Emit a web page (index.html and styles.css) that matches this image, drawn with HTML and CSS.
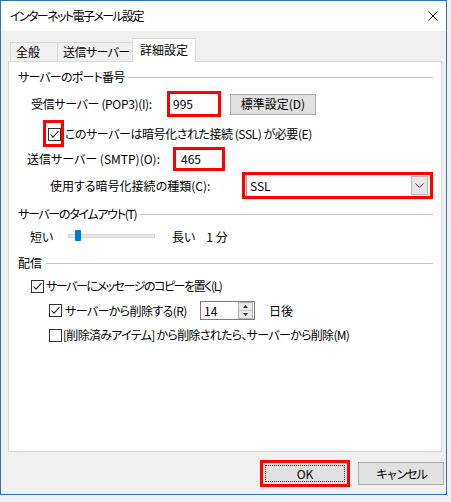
FILE: index.html
```html
<!DOCTYPE html>
<html lang="ja">
<head>
    <meta charset="UTF-8">
    <title>インターネット電子メール設定</title>
    <link rel="stylesheet" href="styles.css">
</head>
<body>
    <div class="window">
        <div class="titlebar">
            <span class="title">インターネット電子メール設定</span>
            <svg class="close" width="10" height="10" viewBox="0 0 10 10">
                <path d="M0.5 0.5 L9.5 9.5 M9.5 0.5 L0.5 9.5" stroke="#000" stroke-width="1" fill="none"/>
            </svg>
        </div>

        <div class="client">
            <div class="tabs">
                <div class="tab tab-general">全般</div>
                <div class="tab tab-smtp">送信サーバー</div>
                <div class="tab tab-adv active">詳細設定</div>
            </div>

            <div class="panel">
                <!-- server ports -->
                <div class="group-head head-ports"><span>サーバーのポート番号</span></div>

                <div class="row row-pop">
                    <span class="label">受信サーバー (POP3)(I):</span>
                    <span class="textbox marked">995</span>
                    <button class="btn btn-default">標準設定(D)</button>
                </div>

                <div class="row row-ssl">
                    <span class="cb-mark">
                        <svg class="cb" width="13" height="13" viewBox="0 0 13 13">
                            <rect x="0.5" y="0.5" width="12" height="12" fill="#fff" stroke="#333"/>
                            <path d="M2.5 6.5 L5 9.2 L10.5 3.2" stroke="#222" stroke-width="1.1" fill="none"/>
                        </svg>
                    </span>
                    <span class="cb-text">このサーバーは暗号化された接続 (SSL) が必要(E)</span>
                </div>

                <div class="row row-smtp">
                    <span class="label">送信サーバー (SMTP)(O):</span>
                    <span class="textbox marked">465</span>
                </div>

                <div class="row row-enc">
                    <span class="label">使用する暗号化接続の種類(C):</span>
                    <span class="select-mark">
                        <span class="select">
                            <span class="select-value">SSL</span>
                            <span class="select-arrow">
                                <svg width="9" height="5" viewBox="0 0 9 5">
                                    <path d="M0.5 0.5 L4.5 4.5 L8.5 0.5" stroke="#444" stroke-width="1" fill="none"/>
                                </svg>
                            </span>
                        </span>
                    </span>
                </div>

                <!-- timeout -->
                <div class="group-head head-timeout"><span>サーバーのタイムアウト(T)</span></div>

                <div class="row row-slider">
                    <span class="s-short">短い</span>
                    <span class="track"><span class="thumb"></span></span>
                    <span class="s-long">長い</span>
                    <span class="s-value">1 分</span>
                </div>

                <!-- delivery -->
                <div class="group-head head-delivery"><span>配信</span></div>

                <div class="row row-copy">
                    <svg class="cb" width="13" height="13" viewBox="0 0 13 13">
                        <rect x="0.5" y="0.5" width="12" height="12" fill="#fff" stroke="#333"/>
                        <path d="M2.5 6.5 L5 9.2 L10.5 3.2" stroke="#222" stroke-width="1.1" fill="none"/>
                    </svg>
                    <span class="cb-text">サーバーにメッセージのコピーを置く(L)</span>
                </div>

                <div class="row row-remove">
                    <svg class="cb" width="13" height="13" viewBox="0 0 13 13">
                        <rect x="0.5" y="0.5" width="12" height="12" fill="#fff" stroke="#333"/>
                        <path d="M2.5 6.5 L5 9.2 L10.5 3.2" stroke="#222" stroke-width="1.1" fill="none"/>
                    </svg>
                    <span class="cb-text">サーバーから削除する(R)</span>
                    <span class="spin">
                        <span class="spin-value">14</span>
                        <span class="spin-btns">
                            <svg width="15" height="17" viewBox="0 0 15 17">
                                <rect x="0.5" y="0.5" width="14" height="16" fill="#e8e8e8" stroke="#b5b5b5"/>
                                <path d="M1 8.5 H14" stroke="#c8c8c8"/>
                                <path d="M5 6 L7.5 3 L10 6 Z" fill="#333"/>
                                <path d="M5 11 L7.5 14 L10 11 Z" fill="#333"/>
                            </svg>
                        </span>
                    </span>
                    <span class="days">日後</span>
                </div>

                <div class="row row-deleted">
                    <svg class="cb" width="13" height="13" viewBox="0 0 13 13">
                        <rect x="0.5" y="0.5" width="12" height="12" fill="#fff" stroke="#333"/>
                    </svg>
                    <span class="cb-text">[削除済みアイテム] から削除されたら、サーバーから削除(M)</span>
                </div>
            </div>

            <div class="footer">
                <button class="btn btn-ok"><span class="focus">OK</span></button>
                <button class="btn btn-cancel">キャンセル</button>
            </div>
        </div>
    </div>
</body>
</html>
```

FILE: styles.css
```css
* {
    box-sizing: border-box;
}
body {
    margin: 0;
    background-color: #f0f0f0;
    font-family: "Noto Sans CJK JP", "Noto Sans", sans-serif;
    font-size: 12px;
    line-height: 18px;
    color: #000;
    font-feature-settings: "palt";
}
.window {
    width: 447px;
    height: 495px;
    border: 1px solid #3872ad;
    background-color: #f0f0f0;
    display: flex;
    flex-direction: column;
}
.titlebar {
    height: 30px;
    background-color: #fff;
    display: flex;
    align-items: center;
    justify-content: space-between;
    padding: 0 8px 0 9px;
    flex-shrink: 0;
}
.title {
    letter-spacing: -1.6px;
}
.client {
    padding-top: 7px;
}

/* tabs */
.tabs {
    display: flex;
    align-items: flex-end;
    height: 23px;
    margin-left: 9px;
    position: relative;
    z-index: 1;
}
.tab {
    height: 19px;
    border: 1px solid #d9d9d9;
    border-bottom: none;
    background-color: #f0f0f0;
    padding-left: 5px;
    display: flex;
    align-items: center;
    margin-left: -1px;
    white-space: nowrap;
}
.tab-general {
    width: 48px;
    margin-left: 0;
}
.tab-smtp {
    width: 76px;
    letter-spacing: -0.6px;
}
.tab.active {
    width: 64px;
    height: 24px;
    margin-bottom: -1px;
    background-color: #fff;
    padding-left: 7px;
    padding-bottom: 1px;
}

.panel {
    margin-left: 7px;
    width: 434px;
    height: 391px;
    border: 1px solid #d9d9d9;
    background-color: #fff;
    padding: 6px 8px 0 9px;
}

/* group headers */
.group-head {
    display: flex;
    align-items: center;
    height: 18px;
    white-space: nowrap;
}
.group-head::after {
    content: "";
    flex: 1;
    height: 1px;
    background-color: #c3c3c3;
    margin-left: 4px;
}
.head-ports span {
    letter-spacing: -0.8px;
}
.head-timeout {
    margin-top: 6px;
}
.head-timeout span {
    letter-spacing: -1.3px;
}
.head-delivery {
    margin-top: 8px;
}

.row {
    display: flex;
    align-items: center;
    white-space: nowrap;
}

.textbox {
    display: flex;
    align-items: center;
    background-color: #fff;
    border: 1px solid #7a7a7a;
}
.marked {
    border: 3px solid #f00;
}

.btn {
    font-family: inherit;
    font-size: 12px;
    color: #000;
    background-color: #e1e1e1;
    border: 1px solid #adadad;
    padding: 0;
    margin: 0;
    line-height: 18px;
}

/* port rows */
.row-pop {
    height: 26px;
    margin-top: 5px;
}
.row-pop .label {
    margin-left: 13px;
    width: 136px;
    letter-spacing: -0.35px;
}
.row-pop .textbox {
    width: 54px;
    height: 26px;
    padding-left: 3px;
}
.btn-default {
    margin-left: 9px;
    width: 86px;
    height: 21px;
}

.row-ssl {
    height: 27px;
    margin-top: 3px;
}
.cb-mark {
    margin-left: 25px;
    width: 21px;
    height: 27px;
    border: 3px solid #f00;
    display: flex;
    align-items: center;
    justify-content: flex-end;
    padding-top: 1px;
}
.cb {
    display: block;
    flex-shrink: 0;
}
.row-ssl .cb-text {
    margin-left: 1px;
    letter-spacing: -0.45px;
}

.row-smtp {
    height: 24px;
}
.row-smtp .label {
    margin-left: 9px;
    width: 146px;
}
.row-smtp .textbox {
    width: 52px;
    height: 24px;
    padding-left: 5px;
}

.row-enc {
    height: 27px;
    margin-top: 1px;
}
.row-enc .label {
    margin-left: 32px;
    width: 193px;
}
.select-mark {
    width: 192px;
    height: 27px;
    border: 3px solid #f00;
    padding: 0 1px;
    display: flex;
    align-items: center;
}
.select {
    flex: 1;
    height: 21px;
    border-left: 1px solid #9a9a9a;
    display: flex;
    align-items: center;
    justify-content: space-between;
    padding-left: 3px;
}
.select-arrow {
    width: 17px;
    height: 19px;
    background-color: #e6e6e6;
    border: 1px solid #b9b9b9;
    display: flex;
    align-items: center;
    justify-content: center;
    margin-right: 1px;
}

/* timeout slider */
.row-slider {
    height: 18px;
    margin-top: 5px;
}
.s-short {
    margin-left: 12px;
    width: 38px;
}
.track {
    width: 87px;
    height: 4px;
    background-color: #e7eaea;
    border: 1px solid #d6d6d6;
    position: relative;
    margin-top: -2px;
}
.thumb {
    position: absolute;
    left: 6px;
    top: -5px;
    width: 6px;
    height: 11px;
    border-radius: 1px;
    background-color: #007ad9;
}
.s-long {
    margin-left: 17px;
}
.s-value {
    margin-left: 11px;
}

/* delivery rows */
.row-copy {
    height: 18px;
    margin-top: 5px;
}
.row-copy .cb {
    margin-left: 13px;
}
.row-copy .cb-text {
    margin-left: 2px;
    letter-spacing: -1.45px;
}

.row-remove {
    height: 19px;
    margin-top: 6px;
}
.row-remove .cb {
    margin-left: 31px;
}
.row-remove .cb-text {
    margin-left: 3px;
    width: 135px;
    letter-spacing: -0.6px;
}
.spin {
    width: 55px;
    height: 19px;
    border: 1px solid #7a7a7a;
    display: flex;
    align-items: center;
    justify-content: space-between;
    padding-left: 3px;
    padding-right: 1px;
}
.spin-btns svg {
    display: block;
}
.days {
    margin-left: 14px;
}

.row-deleted {
    height: 18px;
    margin-top: 6px;
}
.row-deleted .cb {
    margin-left: 31px;
}
.row-deleted .cb-text {
    margin-left: 1px;
    letter-spacing: -0.7px;
}

/* dialog buttons */
.footer {
    display: flex;
    justify-content: flex-end;
    gap: 10px;
    padding-top: 10px;
    padding-right: 2px;
}
.btn-ok,
.btn-cancel {
    width: 86px;
    height: 23px;
}
.btn-cancel {
    letter-spacing: -2px;
}
.btn-ok {
    outline: 3px solid #f00;
    outline-offset: -1px;
    padding: 2px;
}
.focus {
    display: flex;
    align-items: center;
    justify-content: center;
    height: 100%;
    border: 1px dotted #333;
}
```
